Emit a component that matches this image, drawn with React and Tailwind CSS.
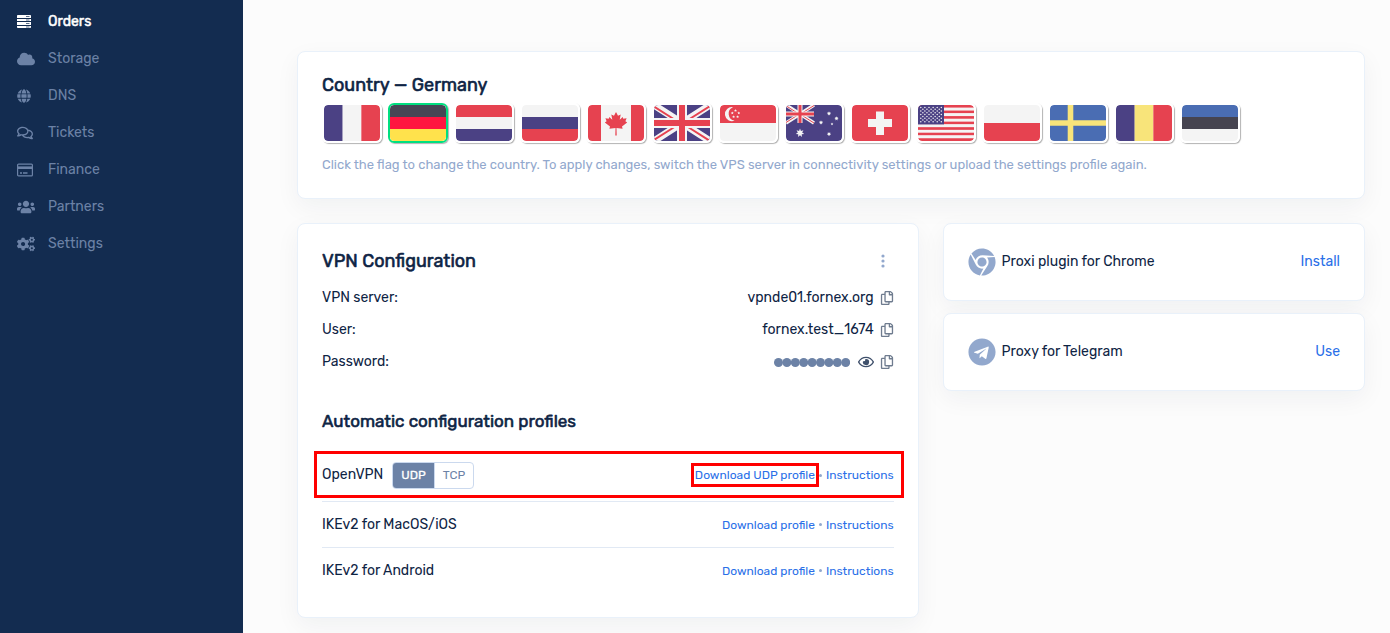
import { FaCloud, FaGlobe, FaRegComments, FaUsers, FaCogs, FaRegCopy, FaRegEye, FaChrome, FaTelegram } from 'react-icons/fa'

const RED = '#e64250'
const BLUE = '#4b4184'
const WHITE = '#f4f4f4'

function ServerIcon({ className }) {
  return (
    <svg className={className} viewBox="0 0 14 14" fill="currentColor">
      <path d="M.8 0h12.4c.5 0 .8.4.8.8V3H0V.8C0 .4.3 0 .8 0zM0 4h14v2H0zM0 7h14v3H0zM0 11h14v1.2c0 .5-.3.8-.8.8H.8c-.5 0-.8-.3-.8-.8z" />
      <path d="M9 1.5h3.5M9 5h3.5M9 8.5h3.5M9 12h3.5" stroke="#132c50" strokeWidth=".7" />
    </svg>
  )
}

function CardIcon({ className }) {
  return (
    <svg className={className} viewBox="0 0 16 14" fill="none" stroke="currentColor">
      <rect x=".6" y="1.1" width="14.8" height="11.8" rx="1" strokeWidth="1.2" />
      <path d="M1 4.7h14" strokeWidth="2.6" />
      <path d="M3 10h2M6 10h4.5" strokeWidth="1.3" />
    </svg>
  )
}

const menu = [
  { name: 'Orders', icon: ServerIcon, size: 'size-3.5', active: true },
  { name: 'Storage', icon: FaCloud, size: 'size-[18px]' },
  { name: 'DNS', icon: FaGlobe, size: 'size-3.5' },
  { name: 'Tickets', icon: FaRegComments, size: 'size-4' },
  { name: 'Finance', icon: CardIcon, size: 'size-4' },
  { name: 'Partners', icon: FaUsers, size: 'size-[18px]' },
  { name: 'Settings', icon: FaCogs, size: 'size-[18px]' },
]

function Vertical({ colors }) {
  return colors.map((c, i) => <rect key={i} x={i * 18.67} width="18.7" height="36" fill={c} />)
}

function Horizontal({ colors }) {
  const h = 36 / colors.length
  return colors.map((c, i) => <rect key={i} y={i * h} width="56" height={h} fill={c} />)
}

function UnionJack() {
  return (
    <>
      <rect width="56" height="36" fill={BLUE} />
      <path d="M0 0l56 36M56 0L0 36" stroke={WHITE} strokeWidth="7" />
      <path d="M0 1.5l22 14M34 22l22 14M56 1l-22 14M22 21L0 35" stroke={RED} strokeWidth="2" />
      <path d="M28 0v36M0 18h56" stroke={WHITE} strokeWidth="10" />
      <path d="M28 0v36M0 18h56" stroke={RED} strokeWidth="6" />
    </>
  )
}

function starPoints(cx, cy, r, inner, n) {
  return Array.from({ length: n * 2 }, (_, i) => {
    const a = (Math.PI * i) / n - Math.PI / 2
    const d = i % 2 ? inner : r
    return `${cx + d * Math.cos(a)},${cy + d * Math.sin(a)}`
  }).join(' ')
}

function Star({ x, y, r, n = 5 }) {
  return <polygon points={starPoints(x, y, r, r * 0.5, n)} fill={WHITE} />
}

function Canada() {
  return (
    <>
      <rect width="56" height="36" fill={WHITE} />
      <path d="M0 0h13v36H0zM43 0h13v36H43z" fill={RED} />
      <path
        d="M28 7l2 3.8 2.7-1.4-1 5.3 3-2.8.6 1.8 3.3-.5-1.2 3 1.8 1.2-5.2 4.2.6 2.2-6.1-.9.2 7.6h-1.4l.2-7.6-6.1.9.6-2.2-5.2-4.2 1.8-1.2-1.2-3 3.3.5.6-1.8 3 2.8-1-5.3 2.7 1.4z"
        fill={RED}
      />
    </>
  )
}

function Singapore() {
  return (
    <>
      <Horizontal colors={[RED, WHITE]} />
      <path d="M13 2.2a7 7 0 1 0 1.6 13.4A7 7 0 0 1 13 2.2z" fill={WHITE} />
      <Star x={15.5} y={5.5} r={1.5} />
      <Star x={12.3} y={8} r={1.5} />
      <Star x={18.8} y={8} r={1.5} />
      <Star x={13.6} y={11.8} r={1.5} />
      <Star x={17.6} y={11.8} r={1.5} />
    </>
  )
}

function Australia() {
  return (
    <>
      <rect width="56" height="36" fill={BLUE} />
      <g transform="scale(.5)">
        <UnionJack />
      </g>
      <Star x={14} y={28} r={4.4} n={7} />
      <Star x={43} y={8.5} r={2.2} n={7} />
      <Star x={35} y={17.5} r={2.2} n={7} />
      <Star x={50.5} y={13.5} r={2.2} n={7} />
      <Star x={46} y={19} r={1.4} />
      <Star x={43} y={29} r={2.2} n={7} />
    </>
  )
}

function UnitedStates() {
  const stars = []
  for (let row = 0; row < 9; row++) {
    for (let col = 0; col < (row % 2 ? 5 : 6); col++) {
      stars.push(<circle key={`${row}-${col}`} cx={2.8 + col * 4.1 + (row % 2) * 2.05} cy={2.4 + row * 1.8} r=".75" fill={WHITE} />)
    }
  }
  return (
    <>
      <Horizontal colors={Array.from({ length: 13 }, (_, i) => (i % 2 ? WHITE : RED))} />
      <rect width="26" height="19.4" fill={BLUE} />
      {stars}
    </>
  )
}

const flags = [
  { country: 'France', art: <Vertical colors={[BLUE, WHITE, RED]} /> },
  { country: 'Germany', art: <Horizontal colors={['#464655', '#ff1640', '#ffe24c']} />, active: true },
  { country: 'Netherlands', art: <Horizontal colors={[RED, WHITE, BLUE]} /> },
  { country: 'Russia', art: <Horizontal colors={[WHITE, BLUE, RED]} /> },
  { country: 'Canada', art: <Canada /> },
  { country: 'United Kingdom', art: <UnionJack /> },
  { country: 'Singapore', art: <Singapore /> },
  { country: 'Australia', art: <Australia /> },
  {
    country: 'Switzerland',
    art: (
      <>
        <rect width="56" height="36" fill={RED} />
        <path d="M24 6.5h8V14h8v8h-8v8h-8v-8h-8v-8h8z" fill={WHITE} />
      </>
    ),
  },
  { country: 'United States', art: <UnitedStates /> },
  { country: 'Poland', art: <Horizontal colors={[WHITE, RED]} /> },
  {
    country: 'Sweden',
    art: (
      <>
        <rect width="56" height="36" fill="#4a6db3" />
        <path d="M20.5 0v36M0 18h56" stroke="#f8e47a" strokeWidth="5.6" />
      </>
    ),
  },
  { country: 'Romania', art: <Vertical colors={[BLUE, '#f8e47a', RED]} /> },
  { country: 'Estonia', art: <Horizontal colors={['#4a6db3', '#464450', WHITE]} /> },
]

function Card({ className = '', children }) {
  return (
    <section className={`bg-white border border-[#e9f1fa] rounded-lg px-6 shadow-[0_8px_24px_rgba(18,43,60,0.05)] ${className}`}>
      {children}
    </section>
  )
}

function CopyButton({ label }) {
  return (
    <button type="button" aria-label={label} className="ml-1.5 text-[#6f7c8f]">
      <FaRegCopy className="block size-3.5" />
    </button>
  )
}

function PasswordDots() {
  return (
    <svg className="w-19 h-2.5 text-[#6c82a6]" viewBox="0 0 76 10" fill="currentColor" role="img" aria-label="Hidden password">
      {Array.from({ length: 9 }, (_, i) => (
        <circle key={i} cx={4.5 + i * 8.4} cy="5.5" r="4.5" />
      ))}
    </svg>
  )
}

function ProfileLinks({ download, highlight }) {
  return (
    <div className="flex items-center text-xs text-[#2a6fe8]">
      <a href="#download" className="relative">
        {download}
        {highlight && <span className="absolute -inset-1 border-3 border-[#ff0000]" />}
      </a>
      <span className="mx-1 size-[3px] rounded-full bg-[#92a8cd]" />
      <a href="#instructions">Instructions</a>
    </div>
  )
}

function PluginCard({ icon: Icon, title, action }) {
  return (
    <Card className="flex items-center h-[78px]">
      <Icon className="size-7 text-[#92a8cd]" />
      <span className="ml-1.5">{title}</span>
      <a href={`#${action.toLowerCase()}`} className="ml-auto text-[#2a6fe8]">{action}</a>
    </Card>
  )
}

export default function App() {
  return (
    <div className="flex min-h-screen bg-[#fcfcfc] text-[#0e2444] text-sm font-['Rubik','Roboto',sans-serif]">
      {/* Sidebar */}
      <aside className="w-[243px] shrink-0 bg-[#132c50]">
        <nav className="flex flex-col pt-[3px]">
          {menu.map(({ name, icon: Icon, size, active }) => (
            <a
              key={name}
              href={`#${name.toLowerCase()}`}
              className={`flex items-center h-[37px] pl-[17px] ${active ? 'text-white [-webkit-text-stroke:0.5px]' : 'text-[#6c82a6]'}`}
            >
              <span className="w-[31px]">
                <Icon className={size} />
              </span>
              {name}
            </a>
          ))}
        </nav>
      </aside>

      <main className="flex-1 min-w-0 pt-[51px] pl-[54px] pr-[25px] pb-3">
        {/* Country picker */}
        <Card className="pt-[19px] pb-[23px]">
          <h2 className="text-lg leading-7 [-webkit-text-stroke:0.6px]">Country — Germany</h2>
          <div className="flex flex-wrap gap-1.5 pt-1">
            {flags.map(({ country, art, active }) => (
              <button
                key={country}
                type="button"
                aria-label={country}
                className={`w-15 h-10 border-2 rounded-md overflow-hidden shadow-[1px_1px_1px_rgba(0,0,0,0.3)] ${active ? 'border-[#00df80]' : 'border-white'}`}
              >
                <svg className="block w-full h-full rounded-sm" viewBox="0 0 56 36" preserveAspectRatio="none">
                  {art}
                </svg>
              </button>
            ))}
          </div>
          <p className="mt-3 text-[13px] leading-5 text-[#92a8cd]">
            Click the flag to change the country. To apply changes, switch the VPS server in connectivity settings or upload the settings profile again.
          </p>
        </Card>

        <div className="grid grid-cols-[621fr_422fr] items-start gap-6 mt-6">
          <Card className="pt-[23px] pb-6">
            <div className="flex items-center justify-between h-7">
              <h2 className="text-lg [-webkit-text-stroke:0.6px]">VPN Configuration</h2>
              <button type="button" aria-label="More" className="px-[7px] text-[#92a8cd]">
                <svg className="block w-2 h-4" viewBox="0 0 8 16" fill="currentColor">
                  <circle cx="4" cy="3" r="1.6" />
                  <circle cx="4" cy="8" r="1.6" />
                  <circle cx="4" cy="13" r="1.6" />
                </svg>
              </button>
            </div>

            <dl className="mt-[7px]">
              <div className="flex items-center h-8">
                <dt>VPN server:</dt>
                <dd className="ml-auto flex items-center">
                  vpnde01.fornex.org
                  <CopyButton label="Copy server" />
                </dd>
              </div>
              <div className="flex items-center h-8">
                <dt>User:</dt>
                <dd className="ml-auto flex items-center">
                  fornex.test_1674
                  <CopyButton label="Copy user" />
                </dd>
              </div>
              <div className="flex items-center h-8">
                <dt>Password:</dt>
                <dd className="ml-auto flex items-center">
                  <PasswordDots />
                  <button type="button" aria-label="Show password" className="ml-2 text-[#3f506b]">
                    <FaRegEye className="block size-4" />
                  </button>
                  <CopyButton label="Copy password" />
                </dd>
              </div>
            </dl>

            <h3 className="mt-[31px] mb-4 text-[17px] leading-6 [-webkit-text-stroke:0.6px]">Automatic configuration profiles</h3>

            {/* Profiles */}
            <div className="relative flex items-center justify-between h-[53px] border-b border-[#e1e9f4]">
              <div className="flex items-center">
                OpenVPN
                <div className="flex ml-[9px] h-[27px] border border-[#cbd9ee] rounded-sm overflow-hidden text-xs">
                  <button type="button" className="px-2 bg-[#6c82a6] text-white [-webkit-text-stroke:0.3px]">UDP</button>
                  <button type="button" className="px-2 border-l border-[#cbd9ee] text-[#6c82a6]">TCP</button>
                </div>
              </div>
              <ProfileLinks download="Download UDP profile" highlight />
              <span className="absolute -left-2 -right-2.5 top-0.5 bottom-[3px] border-3 border-[#ff0000] pointer-events-none" />
            </div>
            <div className="flex items-center justify-between h-[46px] border-b border-[#e1e9f4]">
              IKEv2 for MacOS/iOS
              <ProfileLinks download="Download profile" />
            </div>
            <div className="flex items-center justify-between h-[45px]">
              IKEv2 for Android
              <ProfileLinks download="Download profile" />
            </div>
          </Card>

          <div className="grid gap-3">
            <PluginCard icon={FaChrome} title="Proxi plugin for Chrome" action="Install" />
            <PluginCard icon={FaTelegram} title="Proxy for Telegram" action="Use" />
          </div>
        </div>
      </main>
    </div>
  )
}
